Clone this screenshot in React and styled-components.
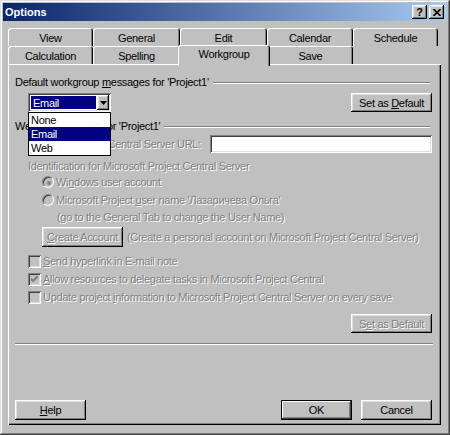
import React from 'react';
import styled, { createGlobalStyle, css } from 'styled-components';

const GlobalStyle = createGlobalStyle`
  html, body {
    margin: 0;
    padding: 0;
    background: #c0c0c0;
  }
  body {
    font-family: 'Liberation Sans', Arial, sans-serif;
    font-size: 11px;
  }
`;

const raised = css`
  box-shadow: inset -1px -1px #000, inset 1px 1px #fff, inset -2px -2px #808080, inset 2px 2px #dfdfdf;
`;
const sunken = css`
  box-shadow: inset 1px 1px #808080, inset -1px -1px #fff, inset 2px 2px #404040, inset -2px -2px #dfdfdf;
`;
const greyed = css`
  color: #808080;
  text-shadow: 1px 1px 0 #fff;
`;

const Dialog = styled.div`
  width: 450px;
  height: 435px;
  box-sizing: border-box;
  padding: 3px;
  background: #c0c0c0;
  box-shadow: inset -1px -1px #404040, inset 1px 1px #dfdfdf, inset -2px -2px #808080, inset 2px 2px #fff;
  display: flex;
  flex-direction: column;
  letter-spacing: -0.3px;
  color: #000;
`;

const TitleBar = styled.div`
  height: 18px;
  display: flex;
  align-items: center;
  padding: 0 3px 0 2px;
  background: linear-gradient(to right, #0a246a, #a6caf0);
`;
const Title = styled.div`
  flex: 1;
  color: #fff;
  font-weight: bold;
  letter-spacing: 0;
`;
const TitleButton = styled.div`
  width: 15px;
  height: 14px;
  margin-left: 2px;
  background: #c0c0c0;
  ${raised};
  display: flex;
  align-items: center;
  justify-content: center;
  font-weight: bold;
  font-size: 11px;
  letter-spacing: 0;
`;

const Body = styled.div`
  flex: 1;
  padding: 7px 6px 0 5px;
  display: flex;
  flex-direction: column;
`;

const TabRow = styled.div`
  display: flex;
  align-items: flex-start;
  height: 18px;
`;
const Tab = styled.div`
  flex: none;
  width: ${p => p.$w}px;
  height: 18px;
  box-sizing: border-box;
  background: #c0c0c0;
  border-radius: 3px 3px 0 0;
  box-shadow: inset 1px 1px #fff, inset -1px 0 #000, inset -2px 0 #808080;
  display: flex;
  align-items: center;
  justify-content: center;
  padding-top: 1px;
  ${p => p.$active && css`
    position: relative;
    z-index: 2;
    width: ${p.$w + 4}px;
    height: 21px;
    margin: -1px -2px -2px;
    padding: 0 0 3px;
  `}
`;

const Panel = styled.div`
  height: 361px;
  box-sizing: border-box;
  padding: 11px 8px 5px 7px;
  box-shadow: inset 1px 1px #fff, inset -1px -1px #000, inset -2px -2px #808080;
  display: flex;
  flex-direction: column;
`;

const GroupHeader = styled.div`
  height: 14px;
  display: flex;
  align-items: center;
  margin-top: ${p => p.$mt || 0}px;
`;
const Etch = styled.div`
  flex: 1;
  height: 0;
  border-top: 1px solid #808080;
  border-bottom: 1px solid #fff;
  margin: ${p => p.$inline ? '1px 3px 0 4px' : '0'};
`;
const Separator = styled(Etch)`
  flex: none;
  margin-top: 10px;
`;

const Row = styled.div`
  display: flex;
  align-items: center;
  height: ${p => p.$h || 14}px;
  margin-top: ${p => p.$mt || 0}px;
  padding-left: ${p => p.$indent || 0}px;
  justify-content: ${p => p.$end ? 'flex-end' : 'flex-start'};
  ${p => p.$disabled && greyed};
`;
const Label = styled.span`
  flex: ${p => p.$grow ? 1 : 'none'};
  white-space: nowrap;
`;
const Key = styled.span`
  text-decoration: underline;
`;

const Combo = styled.div`
  position: relative;
  width: 83px;
  height: 19px;
  margin-left: 13px;
  box-sizing: border-box;
  padding: 2px;
  background: #fff;
  ${sunken};
  display: flex;
`;
const ComboValue = styled.div`
  flex: 1;
  margin: 1px;
  padding-left: 2px;
  background: #000080;
  color: #fff;
  display: flex;
  align-items: center;
`;
const ComboArrow = styled.div`
  width: 12px;
  background: #c0c0c0;
  ${raised};
  display: flex;
  align-items: center;
  justify-content: center;
`;
const ComboList = styled.div`
  position: absolute;
  top: 100%;
  left: 0;
  width: 83px;
  box-sizing: border-box;
  border: 1px solid #000;
  background: #fff;
  z-index: 5;
`;
const ComboItem = styled.div`
  height: 14px;
  display: flex;
  align-items: center;
  padding-left: 2px;
  ${p => p.$selected && css`
    background: #000080;
    color: #fff;
  `}
`;

const Button = styled.button`
  flex: none;
  width: ${p => p.$w || 81}px;
  height: ${p => p.$h || 19}px;
  margin-right: ${p => p.$mr || 0}px;
  padding: 0;
  border: 0;
  font: inherit;
  letter-spacing: inherit;
  color: #000;
  background: #c0c0c0;
  ${raised};
  ${p => p.$default && css`
    box-shadow: inset 0 0 0 1px #000, inset -2px -2px #404040, inset 2px 2px #fff, inset -3px -3px #808080;
  `}
  ${p => p.disabled && greyed};
`;

const TextInput = styled.div`
  width: 222px;
  height: 18px;
  margin-right: 1px;
  box-sizing: border-box;
  background: #fff;
  ${sunken};
`;

const RadioCircle = styled.span`
  flex: none;
  width: 12px;
  height: 12px;
  box-sizing: border-box;
  border-radius: 50%;
  border: 1px solid;
  border-color: #808080 #fff #fff #808080;
  background: #c0c0c0;
  box-shadow: inset 1px 1px #404040;
  margin-right: 2px;
  display: flex;
  align-items: center;
  justify-content: center;
  &::after {
    content: '';
    width: 4px;
    height: 4px;
    border-radius: 50%;
    background: ${p => p.$checked ? '#808080' : 'transparent'};
    margin: 1px 0 0 1px;
  }
`;

const CheckBox = styled.span`
  flex: none;
  width: 13px;
  height: 13px;
  box-sizing: border-box;
  background: #c0c0c0;
  ${sunken};
  margin-right: 2px;
  display: flex;
  align-items: center;
  justify-content: center;
`;

const ButtonBar = styled.div`
  margin-top: auto;
  display: flex;
  align-items: center;
  gap: 9px;
`;
const Spacer = styled.div`
  flex: 1;
`;

const Radio = ({ checked, children, mt }) => (
  <Row $indent={27} $mt={mt} $disabled>
    <RadioCircle $checked={checked} />
    <Label>{children}</Label>
  </Row>
);

const Check = ({ checked, children, mt }) => (
  <Row $indent={13} $mt={mt} $disabled>
    <CheckBox>
      {checked && (
        <svg width="7" height="7" viewBox="0 0 7 7">
          <path d="M0 3 L2 5 L7 0 M0 4 L2 6 L7 1 M0 2 L2 4 L7 -1" stroke="#808080" strokeWidth="1" fill="none" />
        </svg>
      )}
    </CheckBox>
    <Label>{children}</Label>
  </Row>
);

const topTabs = [
  ['View', 85], ['General', 87], ['Edit', 87], ['Calendar', 86], ['Schedule', 85],
];
const bottomTabs = [
  ['Calculation', 85], ['Spelling', 87], ['Workgroup', 88], ['Save', 85],
];

export default function App() {
  return (
    <>
      <GlobalStyle />
      <Dialog>
        <TitleBar>
          <Title>Options</Title>
          <TitleButton>?</TitleButton>
          <TitleButton>
            <svg width="8" height="7" viewBox="0 0 8 7">
              <path d="M0.5 0 L7.5 7 M7.5 0 L0.5 7" stroke="#000" strokeWidth="1.6" />
            </svg>
          </TitleButton>
        </TitleBar>
        <Body>
          <TabRow>
            {topTabs.map(([name, w]) => <Tab key={name} $w={w}>{name}</Tab>)}
          </TabRow>
          <TabRow>
            {bottomTabs.map(([name, w]) => (
              <Tab key={name} $w={w} $active={name === 'Workgroup'}>{name}</Tab>
            ))}
          </TabRow>
          <Panel>
            <GroupHeader>
              <Label>Default workgroup <Key>m</Key>essages for 'Project1'</Label>
              <Etch $inline />
            </GroupHeader>
            <Row $h={19} $mt={4}>
              <Combo>
                <ComboValue>Email</ComboValue>
                <ComboArrow>
                  <svg width="7" height="4" viewBox="0 0 7 4">
                    <path d="M0 0 H7 L3.5 4 Z" fill="#000" />
                  </svg>
                </ComboArrow>
                <ComboList>
                  <ComboItem>None</ComboItem>
                  <ComboItem $selected>Email</ComboItem>
                  <ComboItem>Web</ComboItem>
                </ComboList>
              </Combo>
              <Spacer />
              <Button $mr={1}>Set as <Key>D</Key>efault</Button>
            </Row>
            <GroupHeader $mt={7}>
              <Label>Web client settings for 'Project1'</Label>
              <Etch $inline />
            </GroupHeader>
            <Row $h={18} $mt={2} $indent={13}>
              <Label $grow style={{ color: '#808080', textShadow: '1px 1px 0 #fff' }}>
                Microsoft Project Central Server URL:
              </Label>
              <TextInput />
            </Row>
            <Row $mt={6} $indent={13} $disabled>
              <Label>Identification for Microsoft Project Central Server</Label>
            </Row>
            <Radio checked mt={2}>Wi<Key>n</Key>dows user account</Radio>
            <Radio mt={4}>Microsoft Project <Key>u</Key>ser name 'Лазаричева Ольга'</Radio>
            <Row $mt={3} $indent={42} $disabled>
              <Label>(go to the General Tab to change the User Name)</Label>
            </Row>
            <Row $h={20} $mt={3} $indent={27} $disabled>
              <Button $h={20} disabled><Key>C</Key>reate Account</Button>
              <Label style={{ marginLeft: 4 }}>(Create a personal account on Microsoft Project Central Server)</Label>
            </Row>
            <Check mt={7}><Key>S</Key>end hyperlink in E-mail note</Check>
            <Check checked mt={4}><Key>A</Key>llow resources to delegate tasks in Microsoft Project Central</Check>
            <Check mt={4}>Update project <Key>i</Key>nformation to Microsoft Project Central Server on every save</Check>
            <Row $h={19} $mt={10} $end>
              <Button $mr={1} disabled>S<Key>e</Key>t as Default</Button>
            </Row>
            <Separator />
            <ButtonBar>
              <Button $w={71} $h={20}><Key>H</Key>elp</Button>
              <Spacer />
              <Button $w={71} $h={20} $default>OK</Button>
              <Button $w={71} $h={20} $mr={1}>Cancel</Button>
            </ButtonBar>
          </Panel>
        </Body>
      </Dialog>
    </>
  );
}
